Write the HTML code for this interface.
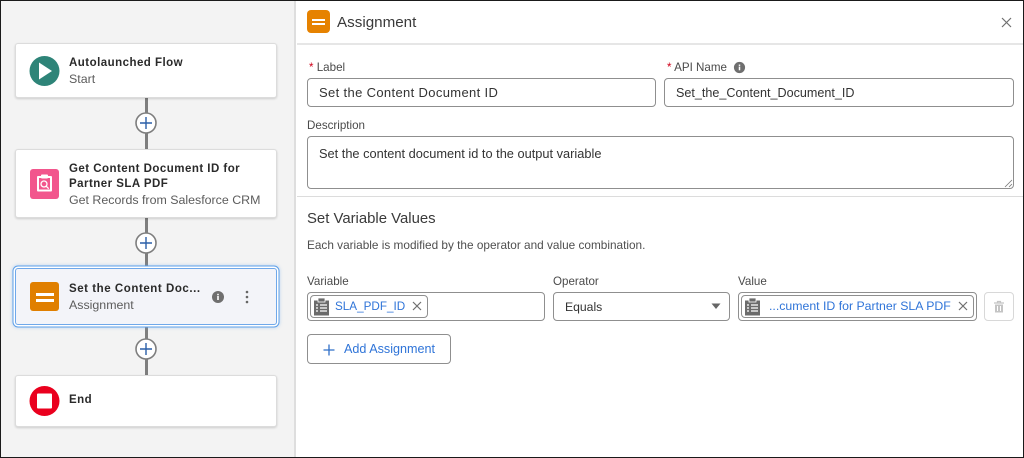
<!DOCTYPE html>
<html><head><meta charset="utf-8"><style>
*{box-sizing:border-box}
html,body{margin:0;padding:0}
body{width:1024px;height:458px;position:relative;overflow:hidden;background:#fff;font-family:"Liberation Sans",sans-serif;color:#333}
.a{position:absolute;white-space:nowrap}
.card{position:absolute;left:15px;width:262px;background:#fff;border:1px solid #dcdcdc;border-radius:3px;box-shadow:0 1px 2px rgba(0,0,0,.16)}
.t{font-size:11.5px;font-weight:bold;color:#2a2a2a;letter-spacing:.47px;line-height:15px}
.s{font-size:12.4px;color:#5c5c5c;line-height:15px}
.lb{font-size:11.6px;color:#4a4a4a;line-height:14px}
.in{position:absolute;background:#fff;border:1px solid #8f8f8f;border-radius:4px}
.v{font-size:12.6px;color:#333;line-height:15px}
.req{color:#d0021b}
.line{position:absolute;left:145px;width:2.5px;background:#7e7e7e}
.plus{position:absolute;left:135px;width:22px;height:22px}
.blue{color:#2f74d8}
</style></head><body>
<div class="a" style="left:0;top:0;width:296px;height:458px;background:#f3f3f3;border-right:2px solid #dedede"></div>

<div class="line" style="top:98px;height:51px"></div>
<div class="line" style="top:218px;height:50px"></div>
<div class="line" style="top:325px;height:50px"></div>

<svg class="plus" style="top:112px" viewBox="0 0 22 22"><circle cx="11" cy="11" r="10" fill="#fff" stroke="#7e7e7e" stroke-width="1.6"/><path d="M11 5v12M5 11h12" stroke="#2a5fa8" stroke-width="1.4"/></svg>
<svg class="plus" style="top:232px" viewBox="0 0 22 22"><circle cx="11" cy="11" r="10" fill="#fff" stroke="#7e7e7e" stroke-width="1.6"/><path d="M11 5v12M5 11h12" stroke="#2a5fa8" stroke-width="1.4"/></svg>
<svg class="plus" style="top:338px" viewBox="0 0 22 22"><circle cx="11" cy="11" r="10" fill="#fff" stroke="#7e7e7e" stroke-width="1.6"/><path d="M11 5v12M5 11h12" stroke="#2a5fa8" stroke-width="1.4"/></svg>

<div class="card" style="top:43px;height:55px"></div>
<svg class="a" style="left:29px;top:55px" width="32" height="32" viewBox="0 0 32 32"><circle cx="15.5" cy="16" r="15" fill="#2e8478"/><path d="M10 7.500v17l13-8.500z" fill="#fff"/></svg>
<div class="a t" style="left:69px;top:56px">Autolaunched Flow</div>
<div class="a s" style="left:69px;top:72px">Start</div>

<div class="card" style="top:149px;height:69px"></div>
<svg class="a" style="left:29px;top:168px" width="32" height="32" viewBox="0 0 32 32"><rect x="1" y="1" width="29" height="30" rx="3" fill="#f2568d"/><path d="M9 9h13v13.500H9z" fill="none" stroke="#fff" stroke-width="2" stroke-linejoin="round"/><rect x="12" y="6.500" width="7" height="4" rx="1" fill="#fff"/><circle cx="15" cy="16" r="3" fill="none" stroke="#fff" stroke-width="1.3"/><path d="M17.200 18.200l2.500 2.500" stroke="#fff" stroke-width="1.3"/></svg>
<div class="a t" style="left:69px;top:162px">Get Content Document ID for</div>
<div class="a t" style="left:69px;top:177px">Partner SLA PDF</div>
<div class="a s" style="left:69px;top:193px">Get Records from Salesforce CRM</div>

<div class="a" style="left:15px;top:268px;width:262px;height:57px;background:#f3f4f9;border:1px solid #6fa8ea;border-radius:3px;box-shadow:0 0 0 1.5px #fff,0 0 0 2.500px #5d9fe8,0 0 3px 3px rgba(110,170,240,.35)"></div>
<div class="a" style="left:30px;top:282px;width:29px;height:29px;background:#e07f00;border-radius:3px"></div>
<div class="a" style="left:36px;top:293px;width:18px;height:2.500px;background:#fff"></div>
<div class="a" style="left:36px;top:299px;width:18px;height:2.500px;background:#fff"></div>
<div class="a t" style="left:69px;top:282px;letter-spacing:.55px">Set the Content Doc...</div>
<div class="a s" style="left:69px;top:298px">Assignment</div>
<svg class="a" style="left:211px;top:290px" width="14" height="14" viewBox="0 0 14 14"><circle cx="7" cy="7" r="6" fill="#6f6f6f"/><rect x="6.200" y="6" width="1.600" height="4" fill="#fff"/><rect x="6.200" y="3.800" width="1.600" height="1.500" fill="#fff"/></svg>
<svg class="a" style="left:244px;top:290px" width="6" height="14" viewBox="0 0 6 14"><circle cx="3" cy="2" r="1.300" fill="#666"/><circle cx="3" cy="7" r="1.300" fill="#666"/><circle cx="3" cy="12" r="1.300" fill="#666"/></svg>

<div class="card" style="top:375px;height:52px"></div>
<svg class="a" style="left:29px;top:385px" width="32" height="32" viewBox="0 0 32 32"><circle cx="15.500" cy="16" r="15" fill="#ea001e"/><rect x="8" y="8.500" width="15" height="15" rx="1" fill="#fff"/></svg>
<div class="a t" style="left:69px;top:393px">End</div>

<div class="a" style="left:297px;top:43px;width:727px;height:2px;background:#e6e6e6"></div>
<div class="a" style="left:307px;top:10px;width:23px;height:23px;background:#e68200;border-radius:4px"></div>
<div class="a" style="left:312px;top:19px;width:13px;height:1.500px;background:#fff"></div>
<div class="a" style="left:312px;top:23px;width:13px;height:1.500px;background:#fff"></div>
<div class="a" style="left:337px;top:14px;font-size:15.200px;line-height:18px;color:#3a3a3a">Assignment</div>
<svg class="a" style="left:1001px;top:17px" width="11" height="11" viewBox="0 0 11 11"><path d="M1 1l9 9M10 1l-9 9" stroke="#6f6f6f" stroke-width="1.2"/></svg>

<div class="a lb" style="left:309px;top:61px"><span class="req">*</span> Label</div>
<div class="in" style="left:307px;top:78px;width:349px;height:29px"></div>
<div class="a v" style="left:319px;top:85px;letter-spacing:.35px;font-size:13px">Set the Content Document ID</div>

<div class="a lb" style="left:667px;top:61px"><span class="req">*</span> API Name</div>
<svg class="a" style="left:733px;top:61px" width="13" height="13" viewBox="0 0 14 14"><circle cx="7" cy="7" r="6" fill="#6f6f6f"/><rect x="6.200" y="6" width="1.600" height="4" fill="#fff"/><rect x="6.200" y="3.800" width="1.600" height="1.500" fill="#fff"/></svg>
<div class="in" style="left:664px;top:78px;width:350px;height:29px"></div>
<div class="a v" style="left:676px;top:86px">Set_the_Content_Document_ID</div>

<div class="a lb" style="left:307px;top:119px">Description</div>
<div class="in" style="left:307px;top:136px;width:707px;height:53px"></div>
<div class="a v" style="left:319px;top:146px;font-size:12.800px">Set the content document id to the output variable</div>
<svg class="a" style="left:1004px;top:179px" width="9" height="9" viewBox="0 0 9 9"><path d="M1 8l7-7M5 8l3-3" stroke="#777" stroke-width=".8"/></svg>

<div class="a" style="left:297px;top:196px;width:727px;height:1px;background:#dcdcdc"></div>
<div class="a" style="left:307px;top:210px;font-size:14.900px;line-height:18px;color:#3a3a3a">Set Variable Values</div>
<div class="a" style="left:307px;top:238px;font-size:11.800px;line-height:14px;color:#4f4f4f">Each variable is modified by the operator and value combination.</div>

<div class="a lb" style="left:307px;top:275px">Variable</div>
<div class="in" style="left:307px;top:292px;width:238px;height:29px"></div>
<div class="a" style="left:310px;top:295px;width:118px;height:23px;border:1px solid #8f8f8f;border-radius:4px"></div>
<svg class="a" style="left:313px;top:297px" width="17" height="19" viewBox="0 0 17 19"><path d="M1 3.500h15v15H1z" fill="#6b6b6b"/><rect x="5" y="1" width="7" height="4" fill="#6b6b6b" stroke="#fff" stroke-width=".8"/><path d="M3 8h2M7 8h7M3 11h2M7 11h7M3 14h2M7 14h7" stroke="#fff" stroke-width="1.2"/></svg>
<div class="a blue" style="left:335px;top:299px;font-size:11.700px;line-height:15px">SLA_PDF_ID</div>
<svg class="a" style="left:412px;top:301px" width="10" height="10" viewBox="0 0 10 10"><path d="M1 1l8 8M9 1l-8 8" stroke="#6f6f6f" stroke-width="1.2"/></svg>

<div class="a lb" style="left:553px;top:275px">Operator</div>
<div class="in" style="left:553px;top:292px;width:177px;height:29px"></div>
<div class="a v" style="left:565px;top:300px;font-size:12.200px">Equals</div>
<svg class="a" style="left:711px;top:303px" width="10" height="7" viewBox="0 0 10 7"><path d="M.5.500h9L5 6z" fill="#666"/></svg>

<div class="a lb" style="left:738px;top:275px">Value</div>
<div class="in" style="left:738px;top:292px;width:239px;height:29px"></div>
<div class="a" style="left:741px;top:295px;width:233px;height:23px;border:1px solid #8f8f8f;border-radius:4px"></div>
<svg class="a" style="left:744px;top:297px" width="17" height="19" viewBox="0 0 17 19"><path d="M1 3.500h15v15H1z" fill="#6b6b6b"/><rect x="5" y="1" width="7" height="4" fill="#6b6b6b" stroke="#fff" stroke-width=".8"/><path d="M3 8h2M7 8h7M3 11h2M7 11h7M3 14h2M7 14h7" stroke="#fff" stroke-width="1.2"/></svg>
<div class="a blue" style="left:769px;top:299px;font-size:12.300px;line-height:15px">...cument ID for Partner SLA PDF</div>
<svg class="a" style="left:958px;top:301px" width="10" height="10" viewBox="0 0 10 10"><path d="M1 1l8 8M9 1l-8 8" stroke="#6f6f6f" stroke-width="1.2"/></svg>

<div class="a" style="left:984px;top:292px;width:30px;height:29px;border:1px solid #d8d8d8;border-radius:4px"></div>
<svg class="a" style="left:993px;top:300px" width="12" height="13" viewBox="0 0 12 13"><path d="M1 3h10M4.500 3V1.500h3V3" fill="none" stroke="#c4c4c4" stroke-width="1.2"/><path d="M2 4.500h8V12.500H2z" fill="#c4c4c4"/><path d="M4.500 6v5M7.500 6v5" stroke="#fff"/></svg>

<div class="a" style="left:307px;top:334px;width:144px;height:30px;border:1px solid #8f8f8f;border-radius:4px"></div>
<svg class="a" style="left:323px;top:344px" width="12" height="12" viewBox="0 0 12 12"><path d="M6 .5v11M.5 6h11" stroke="#2f6fc8" stroke-width="1.3"/></svg>
<div class="a blue" style="left:344px;top:342px;font-size:12.600px;line-height:15px">Add Assignment</div>

<div class="a" style="left:0;top:0;width:1024px;height:458px;border:1px solid #1a1a1a"></div>
</body></html>
